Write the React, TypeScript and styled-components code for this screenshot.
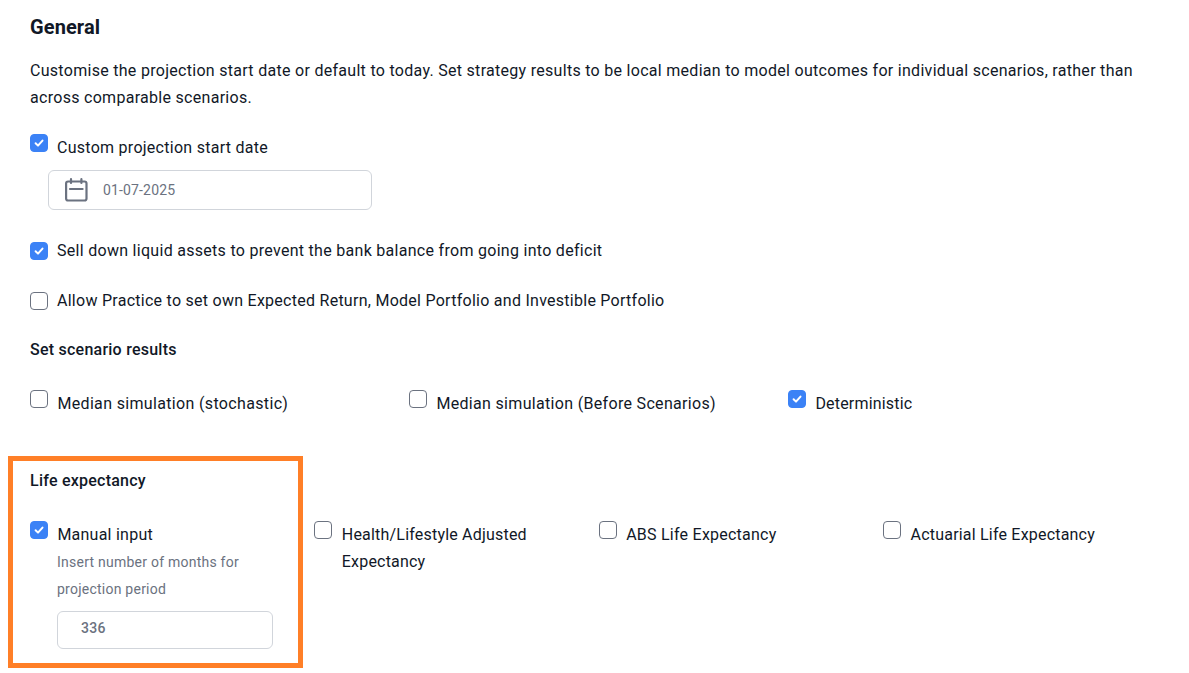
import React from "react"
import styled, { createGlobalStyle } from "styled-components"

const GlobalStyle = createGlobalStyle`
    html, body {
        margin: 0;
        padding: 0;
        background: #fff;
    }
    body {
        font-family: Roboto, "Liberation Sans", sans-serif;
        color: #111827;
        overflow: hidden;
    }
`

const Check = ({ checked }: { checked?: boolean }) => (
    <Box $checked={checked}>
        {checked && (
            <svg width="12" height="12" viewBox="0 0 12 12" fill="none">
                <path d="M2.6 6.3 L5 8.6 L9.5 3.6" stroke="#fff" strokeWidth="2" strokeLinecap="round" strokeLinejoin="round" />
            </svg>
        )}
    </Box>
)

export default function App() {
    return (
        <>
            <GlobalStyle />
            <Page>
                <Title>General</Title>
                <Intro>
                    Customise the projection start date or default to today. Set strategy results to be local median to model outcomes for individual scenarios, rather than across comparable scenarios.
                </Intro>

                <Option $top={23}>
                    <Check checked />
                    <Label $track={0.27}>Custom projection start date</Label>
                </Option>
                <DateField>
                    <svg width="24" height="24" viewBox="0 0 24 24" fill="none" stroke="#6b7280" strokeWidth="2.2" strokeLinecap="round" strokeLinejoin="round">
                        <rect x="1.1" y="3.5" width="20.4" height="19" rx="2" />
                        <path d="M6 1.2 V5 M16.4 1.2 V5 M5 11 H17.6" />
                    </svg>
                    <span>01-07-2025</span>
                </DateField>

                <Option $top={27} $center>
                    <Check checked />
                    <Label $track={0.29}>Sell down liquid assets to prevent the bank balance from going into deficit</Label>
                </Option>
                <Option $top={23} $center>
                    <Check />
                    <Label $track={0.265}>Allow Practice to set own Expected Return, Model Portfolio and Investible Portfolio</Label>
                </Option>

                <SubTitle $top={24}>Set scenario results</SubTitle>
                <ResultRow>
                    <Option>
                        <Check />
                        <Label $track={0.34}>Median simulation (stochastic)</Label>
                    </Option>
                    <Option>
                        <Check />
                        <Label $track={0.32}>Median simulation (Before Scenarios)</Label>
                    </Option>
                    <Option>
                        <Check checked />
                        <Label $track={0.18}>Deterministic</Label>
                    </Option>
                </ResultRow>

                <LifeSection>
                    <Highlight />
                    <SubTitle>Life expectancy</SubTitle>
                    <LifeRow>
                        <LifeCell>
                            <Option>
                                <Check checked />
                                <Label>Manual input</Label>
                            </Option>
                            <Hint>Insert number of months for projection period</Hint>
                            <MonthsField>336</MonthsField>
                        </LifeCell>
                        <LifeCell>
                            <Option>
                                <Check />
                                <Label $track={0.2}>Health/Lifestyle Adjusted Expectancy</Label>
                            </Option>
                        </LifeCell>
                        <LifeCell>
                            <Option>
                                <Check />
                                <Label>ABS Life Expectancy</Label>
                            </Option>
                        </LifeCell>
                        <LifeCell>
                            <Option>
                                <Check />
                                <Label $track={0.2}>Actuarial Life Expectancy</Label>
                            </Option>
                        </LifeCell>
                    </LifeRow>
                </LifeSection>
            </Page>
        </>
    )
}

const Page = styled.main`
    width: 1189px;
    height: 673px;
    box-sizing: border-box;
    padding: 15px 30px 0;
    letter-spacing: 0.24px;
`

const Title = styled.h1`
    margin: 0;
    font-size: 20px;
    line-height: 24px;
    font-weight: 700;
    letter-spacing: 0.1px;
    color: #111827;
`

const Intro = styled.p`
    margin: 18px 0 0;
    font-size: 16px;
    line-height: 27px;
    letter-spacing: 0.29px;
    color: #111827;
`

const Option = styled.div<{ $top?: number; $center?: boolean }>`
    display: flex;
    align-items: ${(p) => (p.$center ? "center" : "flex-start")};
    gap: 9px;
    margin-top: ${(p) => p.$top ?? 0}px;
`

const Box = styled.span<{ $checked?: boolean }>`
    flex: none;
    width: 18px;
    height: 18px;
    box-sizing: border-box;
    display: flex;
    align-items: center;
    justify-content: center;
    border-radius: 4px;
    border: 1px solid ${(p) => (p.$checked ? "#3b82f6" : "#6b7280")};
    background: ${(p) => (p.$checked ? "#3b82f6" : "#fff")};
`

const Label = styled.span<{ $track?: number }>`
    font-size: 16px;
    line-height: 27px;
    letter-spacing: ${(p) => p.$track ?? 0.24}px;
    color: #111827;
`

const DateField = styled.div`
    display: flex;
    align-items: center;
    gap: 14px;
    width: 324px;
    height: 40px;
    box-sizing: border-box;
    margin: 9px 0 0 18px;
    padding-left: 16px;
    border: 1px solid #d1d5db;
    border-radius: 6px;
    font-size: 14px;
    letter-spacing: 0.15px;
    color: #6b7280;
`

const SubTitle = styled.h2<{ $top?: number }>`
    margin: ${(p) => p.$top ?? 0}px 0 0;
    font-size: 16px;
    line-height: 24px;
    font-weight: 500;
    color: #111827;
`

const ResultRow = styled.div`
    display: grid;
    grid-template-columns: 379px 379px 1fr;
    margin-top: 28px;

    ${Option} {
        gap: 9.4px;
    }
`

const LifeSection = styled.section`
    position: relative;
    margin-top: 52px;
`

const Highlight = styled.div`
    position: absolute;
    left: -22px;
    top: -13px;
    width: 295px;
    height: 212px;
    box-sizing: border-box;
    border: 5px solid #ff7f27;
    pointer-events: none;
`

const LifeRow = styled.div`
    display: grid;
    grid-template-columns: repeat(4, 284.4px);
    margin-top: 28px;

    ${Option} {
        gap: 9.4px;
    }
`

const LifeCell = styled.div`
    padding-right: 40px;
`

const Hint = styled.p`
    margin: 1px 0 0 27px;
    font-size: 14px;
    line-height: 27px;
    color: #6b7280;
`

const MonthsField = styled.div`
    display: flex;
    align-items: center;
    width: 216px;
    height: 38px;
    box-sizing: border-box;
    margin: 8px 0 0 27px;
    padding: 0 0 4px 23px;
    border: 1px solid #d1d5db;
    border-radius: 6px;
    font-size: 14px;
    font-weight: 500;
    color: #6b7280;
`
